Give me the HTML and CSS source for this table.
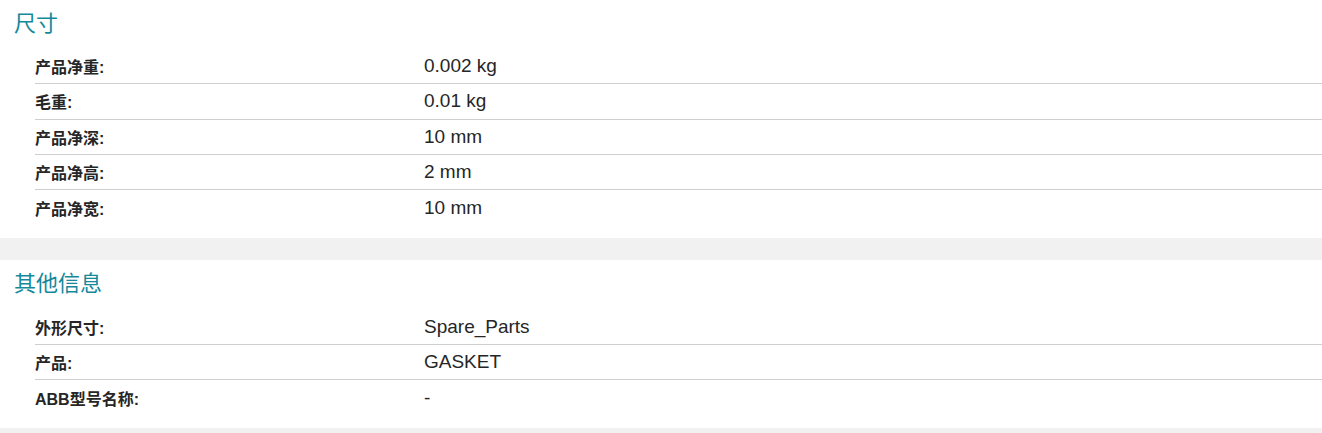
FILE: index.html
```html
<!DOCTYPE html>
<html lang="zh-CN">
<head>
<meta charset="utf-8">
<title>产品参数</title>
<link rel="stylesheet" href="styles.css">
</head>
<body>
<section class="panel">
  <h2 class="panel-title">尺寸</h2>
  <dl class="spec-list">
    <div class="spec-row"><dt class="spec-label">产品净重:</dt><dd class="spec-value">0.002 kg</dd></div>
    <div class="spec-row"><dt class="spec-label">毛重:</dt><dd class="spec-value">0.01 kg</dd></div>
    <div class="spec-row"><dt class="spec-label">产品净深:</dt><dd class="spec-value">10 mm</dd></div>
    <div class="spec-row"><dt class="spec-label">产品净高:</dt><dd class="spec-value">2 mm</dd></div>
    <div class="spec-row"><dt class="spec-label">产品净宽:</dt><dd class="spec-value">10 mm</dd></div>
  </dl>
</section>
<section class="panel">
  <h2 class="panel-title">其他信息</h2>
  <dl class="spec-list">
    <div class="spec-row"><dt class="spec-label">外形尺寸:</dt><dd class="spec-value">Spare_Parts</dd></div>
    <div class="spec-row"><dt class="spec-label">产品:</dt><dd class="spec-value">GASKET</dd></div>
    <div class="spec-row"><dt class="spec-label">ABB型号名称:</dt><dd class="spec-value">-</dd></div>
  </dl>
</section>
</body>
</html>
```
FILE: styles.css
```css
* { box-sizing: border-box; }
html, body {
  margin: 0;
  padding: 0;
  background: #f1f1f1;
  font-family: "Liberation Sans", Arial, "Noto Sans CJK SC", sans-serif;
  color: #262626;
}
.panel {
  background: #ffffff;
  padding: 12px 0 13px 14px;
  margin-bottom: 22px;
}
.panel-title {
  margin: 0 0 13px 0;
  font-size: 22px;
  line-height: 24px;
  font-weight: normal;
  color: #15889a;
}
.spec-list {
  margin: 0 0 0 21px;
  padding: 0;
}
.spec-row {
  display: flex;
  align-items: center;
  height: 35.3px;
  border-bottom: 1px solid #cfcfcf;
}
.spec-row:last-child {
  border-bottom: none;
}
.spec-label {
  width: 389px;
  flex: none;
  font-size: 16px;
  font-weight: bold;
  color: #262626;
}
.spec-value {
  margin: 0;
  font-size: 19px;
  color: #262626;
}
```
